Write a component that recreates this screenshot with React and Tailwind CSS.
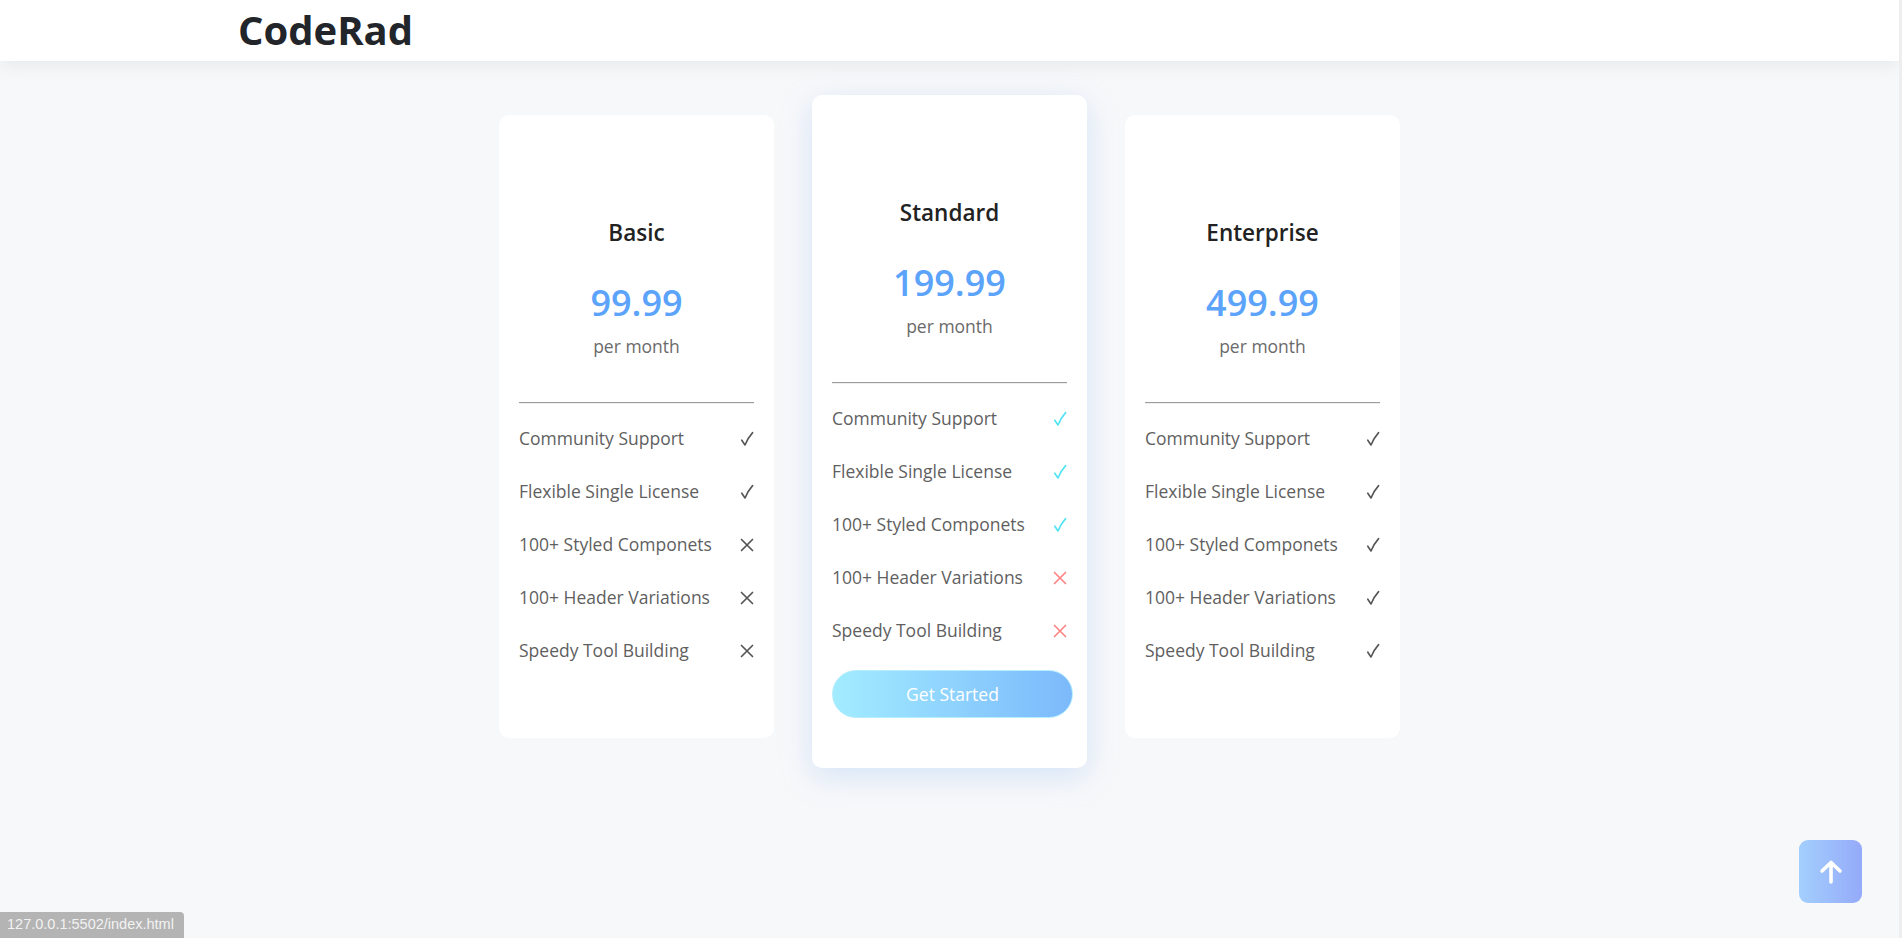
import React from "react"

const plans = [
    {
        name: "Basic",
        price: "99.99",
        features: [true, true, false, false, false],
    },
    {
        name: "Standard",
        price: "199.99",
        features: [true, true, true, false, false],
        featured: true,
    },
    {
        name: "Enterprise",
        price: "499.99",
        features: [true, true, true, true, true],
    },
]

const featureNames = [
    "Community Support",
    "Flexible Single License",
    "100+ Styled Componets",
    "100+ Header Variations",
    "Speedy Tool Building",
]

const CheckIcon = ({ color }) => (
    <svg width="14" height="16" viewBox="0 0 14 16" fill="none">
        <path
            d="M1.8 9.2 L5 14 C7 9 9.5 5 12.6 1.6"
            stroke={color}
            strokeWidth="1.6"
            strokeLinecap="round"
            strokeLinejoin="round"
        />
    </svg>
)

const CrossIcon = ({ color }) => (
    <svg width="14" height="14" viewBox="0 0 14 14" fill="none">
        <path
            d="M1.5 1.5 L12.5 12.5 M12.5 1.5 L1.5 12.5"
            stroke={color}
            strokeWidth="1.7"
            strokeLinecap="round"
        />
    </svg>
)

const PlanCard = ({ plan }) => {
    const checkColor = plan.featured ? "#4fe3f3" : "#555555"
    const crossColor = plan.featured ? "#ff8585" : "#555555"

    return (
        <div
            className={
                plan.featured
                    ? "w-[275px] bg-white rounded-[10px] px-5 pt-[103px] pb-[50px] shadow-[0_8px_30px_rgba(150,190,240,0.35)]"
                    : "w-[275px] mt-[20px] bg-white rounded-[10px] px-5 pt-[103px] pb-[61px]"
            }
        >
            <h3 className="text-center text-[22.5px] leading-[30px] font-semibold text-[#222222]">
                {plan.name}
            </h3>
            <p className="mt-[33px] text-center text-[36px] leading-[44px] font-semibold text-[#5ba3fb]">
                {plan.price}
            </p>
            <p className="mt-[8px] text-center text-[17.5px] leading-[26px] text-[#6a6a6a]">
                per month
            </p>
            <div className="mt-[43px] border-t border-t-[#9c9c9c] border-b border-b-[#eeeeee]" />
            <ul className="mt-[8px]">
                {featureNames.map((name, i) => (
                    <li
                        key={name}
                        className="h-[53px] flex items-center justify-between text-[17.5px] text-[#5f5f5f]"
                    >
                        <span>{name}</span>
                        <span className="w-[14px] flex justify-center">
                            {plan.features[i] ? (
                                <CheckIcon color={checkColor} />
                            ) : (
                                <CrossIcon color={crossColor} />
                            )}
                        </span>
                    </li>
                ))}
            </ul>
            {plan.featured && (
                <button className="mt-[13px] w-[241px] h-[48px] rounded-full bg-gradient-to-r from-[#a2ecff] to-[#7cb9fb] text-white text-[17.5px] border border-[#b6eefd]">
                    Get Started
                </button>
            )}
        </div>
    )
}

const App = () => {
    return (
        <div className="min-h-screen bg-[#f7f8fa] font-['Open_Sans',sans-serif]">
            <header className="h-[61px] mr-[3px] bg-white flex items-center pl-[238px] shadow-[0_4px_18px_rgba(0,0,0,0.07)] relative">
                <h1 className="text-[40px] leading-none font-bold text-[#22252a] -mt-[2px]">
                    CodeRad
                </h1>
            </header>

            <main className="flex justify-center items-start gap-[38px] pt-[34px] pr-[3px]">
                {plans.map((plan) => (
                    <PlanCard key={plan.name} plan={plan} />
                ))}
            </main>

            <button className="fixed right-[40px] bottom-[35px] w-[63px] h-[63px] rounded-[9px] bg-gradient-to-r from-[#a3cffd] to-[#95aaf9] flex items-center justify-center">
                <svg width="24" height="26" viewBox="0 0 24 26" fill="none">
                    <path
                        d="M12 23 V4 M3 12 L12 3.5 L21 12"
                        stroke="white"
                        strokeWidth="3.6"
                        strokeLinecap="round"
                        strokeLinejoin="round"
                    />
                </svg>
            </button>

            <div className="fixed left-0 bottom-0 h-[26px] w-[184px] px-[7px] flex items-center bg-[#b4b4b4] rounded-tr-[4px] text-[14.5px] text-[#f2f2f2] font-['Liberation_Sans',sans-serif]">
                127.0.0.1:5502/index.html
            </div>

            <div className="fixed top-0 right-0 h-screen w-[3px] bg-[#eeeeee]" />
        </div>
    )
}

export default App
